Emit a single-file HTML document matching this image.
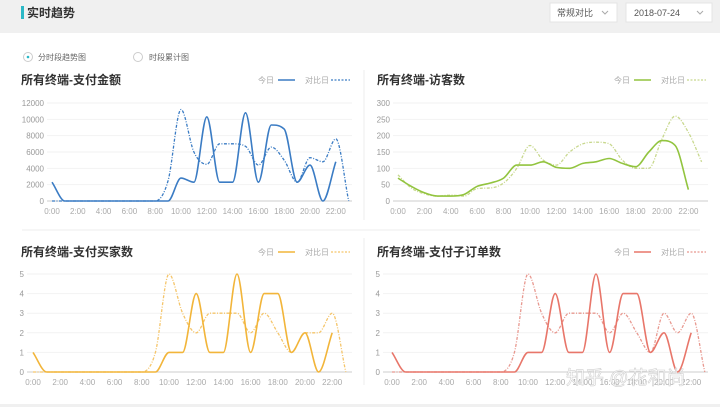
<!DOCTYPE html>
<html><head><meta charset="utf-8"><style>
body{margin:0;width:720px;height:407px;overflow:hidden;background:#f0f0f0;font-family:"Liberation Sans","Noto Sans CJK SC",sans-serif}
svg{display:block}
</style></head><body>
<svg id="s" width="720" height="407" xmlns="http://www.w3.org/2000/svg" font-family="Liberation Sans, Noto Sans CJK SC, sans-serif">
<rect x="0" y="0" width="720" height="407" fill="#f0f0f0"/>
<rect x="0" y="33" width="720" height="371" fill="#fff"/>
<rect x="21" y="6" width="3" height="13" fill="#2bb8c6"/>
<text x="27" y="17" font-size="12" font-weight="bold" fill="#333">实时趋势</text>
<rect x="550" y="3" width="67" height="19" fill="#fff" stroke="#e4e4e4"/>
<text x="557" y="16" font-size="9" fill="#555">常规对比</text>
<path d="M602 11l3 3 3-3" fill="none" stroke="#aaa"/>
<rect x="626" y="3" width="86" height="19" fill="#fff" stroke="#e4e4e4"/>
<text x="634" y="16" font-size="9" fill="#555">2018-07-24</text>
<path d="M697 11l3 3 3-3" fill="none" stroke="#aaa"/>
<circle cx="28" cy="57" r="4.5" fill="#fff" stroke="#ccc"/><circle cx="28" cy="57" r="1.3" fill="#2bb8c6"/>
<text x="38" y="60" font-size="8" fill="#666">分时段趋势图</text>
<circle cx="138" cy="57" r="4.5" fill="#fff" stroke="#ccc"/>
<text x="149" y="60" font-size="8" fill="#666">时段累计图</text>
<line x1="364" y1="70" x2="364" y2="220" stroke="#eee"/>
<line x1="364" y1="238" x2="364" y2="385" stroke="#eee"/>
<line x1="22" y1="230" x2="700" y2="230" stroke="#eee"/>
<g id="c"></g>
<text x="566" y="384" font-size="19" fill="#fff" stroke="#ccc" stroke-width="0.6" opacity="0.9">知乎 @花和尚</text>
</svg>
<script>
var g=document.getElementById('c'),h='';
function sp(p){var n=p.length,m=[],d=[];
for(var i=0;i<n-1;i++)d.push((p[i+1][1]-p[i][1])/(p[i+1][0]-p[i][0]));
for(i=0;i<n;i++){if(i==0)m.push(d[0]);else if(i==n-1)m.push(d[n-2]);else if(d[i-1]*d[i]<=0)m.push(0);else m.push((d[i-1]+d[i])/2);}
for(i=0;i<n-1;i++){if(d[i]==0){m[i]=0;m[i+1]=0;continue;}var a=m[i]/d[i],b=m[i+1]/d[i],s=a*a+b*b;if(s>9){var t=3/Math.sqrt(s);m[i]=t*a*d[i];m[i+1]=t*b*d[i];}}
var r='M'+p[0][0]+' '+p[0][1];
for(i=0;i<n-1;i++){var hx=(p[i+1][0]-p[i][0])/3;
r+=' C'+(p[i][0]+hx).toFixed(1)+' '+(p[i][1]+m[i]*hx).toFixed(1)+' '+(p[i+1][0]-hx).toFixed(1)+' '+(p[i+1][1]-m[i+1]*hx).toFixed(1)+' '+p[i+1][0].toFixed(1)+' '+p[i+1][1].toFixed(1);}
return r;}
function chart(o){
var tx=o.tx,ty=o.ty;
h+='<text x="'+tx+'" y="'+ty+'" font-size="12" font-weight="bold" fill="#333">'+o.title+'</text>';
var lx=o.lx;
h+='<text x="'+lx+'" y="'+(ty-1)+'" font-size="8" fill="#aaa">今日</text><line x1="'+(lx+20)+'" y1="'+(ty-4)+'" x2="'+(lx+37)+'" y2="'+(ty-4)+'" stroke="'+o.c+'" stroke-width="1.5"/>';
h+='<text x="'+(lx+47)+'" y="'+(ty-1)+'" font-size="8" fill="#aaa">对比日</text><line x1="'+(lx+73)+'" y1="'+(ty-4)+'" x2="'+(lx+92)+'" y2="'+(ty-4)+'" stroke="'+o.c2+'" stroke-width="1.2" stroke-dasharray="2,1.5"/>';
var n=o.ticks.length-1;
for(var i=0;i<=n;i++){var y=o.y0+(o.y1-o.y0)*i/n;
h+='<line x1="'+o.ax+'" y1="'+y+'" x2="'+o.ax2+'" y2="'+y+'" stroke="'+(i?'#f2f2f2':'#ccc')+'"/>';
h+='<text x="'+(o.ax-3)+'" y="'+(y+3)+'" font-size="8" fill="#999" text-anchor="end">'+o.ticks[i]+'</text>';}
for(var k=0;k<=22;k+=2){h+='<text x="'+(o.x0+o.dx*k)+'" y="'+(o.y0+13)+'" font-size="8" fill="#aaa" text-anchor="middle">'+k+':00</text>';}
function pts(a){return a.map(function(v,i){return [o.x0+o.dx*i,o.y0-(o.y0-o.y1)*v/o.max];});}
h+='<path d="'+sp(pts(o.b))+'" fill="none" stroke="'+o.c2+'" stroke-width="1.3" stroke-dasharray="3,1.5,1,1.5"/>';
h+='<path d="'+sp(pts(o.a))+'" fill="none" stroke="'+o.c+'" stroke-width="1.6"/>';
}
chart({title:'所有终端-支付金额',tx:21,ty:84,lx:258,c:'#3b7cc4',c2:'#3b7cc4',ax:47,ax2:352,y0:201,y1:103,max:12,ticks:['0','2000','4000','6000','8000','10000','12000'],x0:52,dx:12.9,
a:[2.3,0,0,0,0,0,0,0,0,0,2.8,2.3,10.3,2.3,2.3,10.8,2.3,9.3,8.8,2.3,4.4,0,4.8],
b:[0,0,0,0,0,0,0,0,0,2.5,11.2,6,4.5,7,7,6.7,4.4,6.6,5,2.3,5.3,4.8,7.6,0]});
chart({title:'所有终端-访客数',tx:377,ty:84,lx:614,c:'#92c43f',c2:'#c8d88e',ax:393,ax2:708,y0:201,y1:103,max:300,ticks:['0','50','100','150','200','250','300'],x0:398,dx:13.2,
a:[70,45,25,15,15,20,45,55,70,110,110,120,103,100,115,120,130,115,105,150,185,170,35],
b:[80,40,22,15,18,15,38,40,55,100,170,125,110,150,175,180,175,125,100,100,190,260,210,120]});
chart({title:'所有终端-支付买家数',tx:21,ty:256,lx:258,c:'#f2b53a',c2:'#f5c56a',ax:27,ax2:352,y0:372,y1:274,max:5,ticks:['0','1','2','3','4','5'],x0:33,dx:13.6,
a:[1,0,0,0,0,0,0,0,0,0,1,1,4,1,1,5,1,4,4,1,2,0,2],
b:[0,0,0,0,0,0,0,0,0,1,5,3,2,3,3,3,2,3,2,1,2,2,3,0]});
chart({title:'所有终端-支付子订单数',tx:377,ty:256,lx:614,c:'#e8766a',c2:'#e8988f',ax:383,ax2:708,y0:372,y1:274,max:5,ticks:['0','1','2','3','4','5'],x0:392,dx:13.6,
a:[1,0,0,0,0,0,0,0,0,0,1,1,4,1,1,5,1,4,4,1,2,0,2],
b:[0,0,0,0,0,0,0,0,0,1,5,3,2,3,3,3,2,3,2,1,3,2,3,0]});
g.innerHTML=h;
</script>
</body></html>
